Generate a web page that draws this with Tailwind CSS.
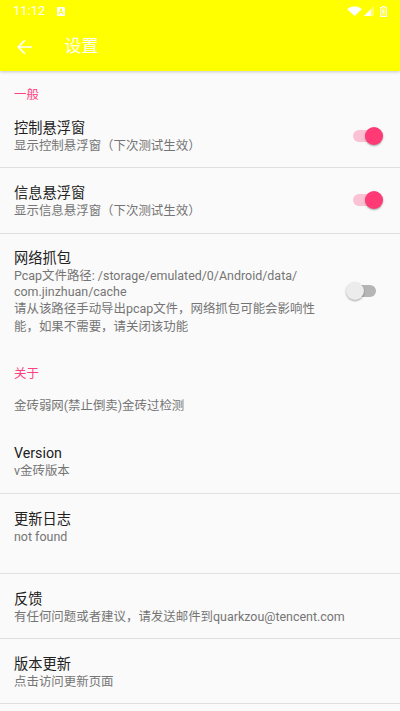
<!DOCTYPE html>
<html><head><meta charset="utf-8"><script src="https://cdn.jsdelivr.net/npm/@tailwindcss/browser@4"></script></head>
<body class="m-0 bg-[#fafafa]">
<div class="w-[400px] h-[711px] overflow-hidden flex flex-col bg-[#fafafa] font-['Roboto','Noto_Sans_CJK_SC',sans-serif]">
  <header class="h-[71px] shrink-0 bg-[#ffff00] shadow-[0_1px_3px_rgba(0,0,0,0.2)] relative z-10 flex flex-col">
    <div class="h-[22px] flex items-center pl-[13px] pr-[13px] text-white">
      <span class="text-[12.8px] leading-none tracking-[0.1px]">11:12</span>
      <svg class="ml-[12px]" width="8" height="9" viewBox="0 0 8 9"><rect width="8" height="9" rx="1" fill="#fff"/><path d="M2 7.5 L4 1.5 L6 7.5 M2.8 5.5 H5.2" stroke="#ffff00" stroke-width="1" fill="none"/></svg>
      <div class="ml-auto flex items-center">
        <svg width="15" height="10" viewBox="0 0 15 10"><path d="M0 3 Q7.5 -2.5 15 3 L7.5 10 Z" fill="#fff"/></svg>
        <svg class="ml-[2px]" width="10" height="10" viewBox="0 0 10 10"><path d="M10 0 V10 H0 Z" fill="#fff" fill-opacity="0.35"/><path d="M7 3 V10 H0 Z" fill="#fff"/></svg>
        <svg class="ml-[6px]" width="7" height="11" viewBox="0 0 7 11"><path d="M2.2 0.5 H4.8 V1.5 H6.5 V10.5 H0.5 V1.5 H2.2 Z" fill="#fff" fill-opacity="0.3" stroke="#fff" stroke-width="1"/><path d="M4 2.5 L2 6.2 H3.3 L3 8.8 L5 5 H3.7 Z" fill="#fff"/></svg>
      </div>
    </div>
    <div class="flex-1 flex items-center pl-[17px] text-white">
      <svg width="16" height="16" viewBox="0 0 16 16" fill="none" stroke="#fff" stroke-width="1.7"><path d="M15 8 H1.5 M8 1.2 L1.3 8 L8 14.8"/></svg>
      <span class="ml-[31.5px] text-[17px] leading-none">设置</span>
    </div>
  </header>

  <main class="flex-1 flex flex-col">
    <div class="h-[38px] pt-[16px] pl-[14px] text-[12.44px] leading-[16px] text-[#ff4081]">一般</div>

    <div class="h-[58px] pl-[14px] pr-[17px] flex items-center justify-between">
      <div class="pb-[4px]">
        <div class="text-[14.22px] leading-[19px] text-[#212121]">控制悬浮窗</div>
        <div class="text-[12.44px] leading-[16px] text-[#757575]">显示控制悬浮窗（下次测试生效）</div>
      </div>
      <div class="relative w-[30px] h-[18px] mt-[-5px]">
        <div class="absolute left-0 top-[3px] w-[26px] h-[12px] rounded-full bg-[#ff4081]/30"></div>
        <div class="absolute right-0 top-0 w-[18px] h-[18px] rounded-full bg-[#ff3a75] shadow-[0_1px_2px_rgba(0,0,0,0.35)]"></div>
      </div>
    </div>
    <div class="h-[1px] bg-[#e0e0e0]"></div>

    <div class="h-[65px] pl-[14px] pr-[17px] flex items-center justify-between">
      <div class="pt-[2px]">
        <div class="text-[14.22px] leading-[19px] text-[#212121]">信息悬浮窗</div>
        <div class="text-[12.44px] leading-[16px] text-[#757575]">显示信息悬浮窗（下次测试生效）</div>
      </div>
      <div class="relative w-[30px] h-[18px] mt-[-1px]">
        <div class="absolute left-0 top-[3px] w-[26px] h-[12px] rounded-full bg-[#ff4081]/30"></div>
        <div class="absolute right-0 top-0 w-[18px] h-[18px] rounded-full bg-[#ff3a75] shadow-[0_1px_2px_rgba(0,0,0,0.35)]"></div>
      </div>
    </div>
    <div class="h-[1px] bg-[#e0e0e0]"></div>

    <div class="h-[104px] pl-[14px] pr-[24px] flex items-start justify-between">
      <div class="w-[304px] pt-[15px]">
        <div class="text-[14.22px] leading-[19px] text-[#212121]">网络抓包</div>
        <div class="text-[12.44px] leading-[16px] text-[#757575]">Pcap文件路径: /storage/emulated/0/Android/data/<br>com.jinzhuan/cache</div>
        <div class="text-[12.44px] leading-[18px] text-[#757575]">请从该路径手动导出pcap文件，网络抓包可能会影响性能，如果不需要，请关闭该功能</div>
      </div>
      <div class="relative w-[30px] h-[18px] mt-[48px]">
        <div class="absolute right-0 top-[3px] w-[26px] h-[12px] rounded-full bg-[#b5b5b5]"></div>
        <div class="absolute left-0 top-0 w-[18px] h-[18px] rounded-full bg-[#ececec] shadow-[0_1px_2px_rgba(0,0,0,0.35)]"></div>
      </div>
    </div>

    <div class="h-[32px] pt-[28px] pl-[14px] text-[12.44px] leading-[16px] text-[#ff4081] box-content">关于</div>
    <div class="h-[19px] pl-[14px] text-[12.44px] leading-[16px] text-[#757575]">金砖弱网(禁止倒卖)金砖过检测</div>

    <div class="h-[49px] pl-[14px] pt-[27px] box-content">
      <div class="text-[14.22px] leading-[19px] text-[#212121]">Version</div>
      <div class="text-[12.44px] leading-[16px] text-[#757575]">v金砖版本</div>
    </div>
    <div class="h-[1px] bg-[#e0e0e0]"></div>
    <div class="h-[79px] pl-[14px] pt-[15px]">
      <div class="text-[14.22px] leading-[20px] text-[#212121]">更新日志</div>
      <div class="text-[12.44px] leading-[16px] text-[#757575]">not found</div>
    </div>
    <div class="h-[1px] bg-[#e0e0e0]"></div>
    <div class="h-[64px] pl-[14px] pt-[15px]">
      <div class="text-[14.22px] leading-[20px] text-[#212121]">反馈</div>
      <div class="text-[12.44px] leading-[16px] text-[#757575]">有任何问题或者建议，请发送邮件到quarkzou@tencent.com</div>
    </div>
    <div class="h-[1px] bg-[#e0e0e0]"></div>
    <div class="h-[64px] pl-[14px] pt-[15px]">
      <div class="text-[14.22px] leading-[20px] text-[#212121]">版本更新</div>
      <div class="text-[12.44px] leading-[16px] text-[#757575]">点击访问更新页面</div>
    </div>
    <div class="h-[1px] bg-[#e0e0e0]"></div>
  </main>
</div>
</body></html>
